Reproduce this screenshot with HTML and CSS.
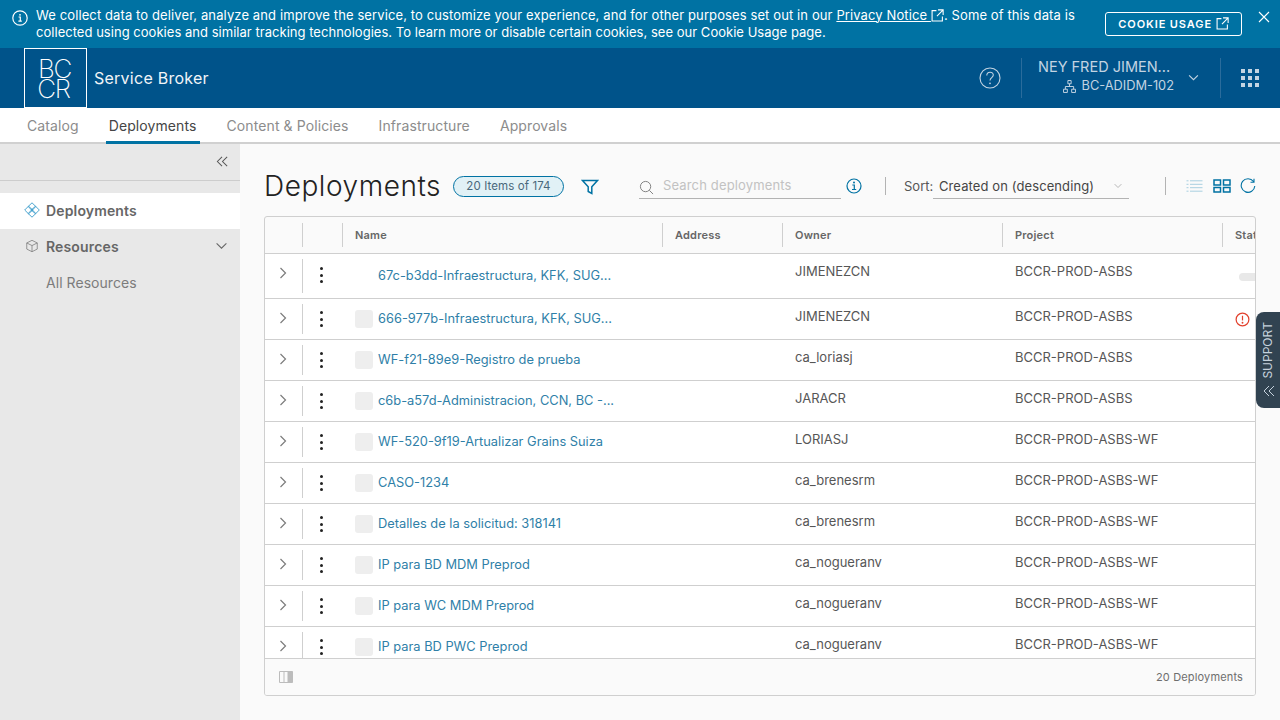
FILE: index.html
```html
<!DOCTYPE html>
<html lang="en">
<head>
<meta charset="utf-8">
<title>Deployments - Service Broker</title>
<link rel="stylesheet" href="styles.css">
</head>
<body>
<section class="banner">
  <svg class="banner-info" viewBox="0 0 16 16"><circle cx="8" cy="8" r="7.200"/><path d="M6.600 7h1.700v4M6.400 11.200h3.400"/><circle class="dot" cx="8" cy="4.800" r=".9"/></svg>
  <p class="banner-text">We collect data to deliver, analyze and improve the service, to customize your experience, and for other purposes set out in our <a class="banner-link">Privacy Notice </a><svg class="ext" viewBox="0 0 12 12"><path d="M5 1.500H1v9.500h9.500V7M6.500 .8h4.700v4.700M11 1 5.500 6.500"/></svg>. Some of this data is <span class="banner-line2">collected using cookies and similar tracking technologies. To learn more or disable certain cookies, see our Cookie Usage page.</span></p>
  <button class="cookie-btn">COOKIE USAGE <svg class="ext" viewBox="0 0 12 12"><path d="M5 1.500H1v9.500h9.500V7M6.500 .8h4.700v4.700M11 1 5.500 6.500"/></svg></button>
  <svg class="banner-close" viewBox="0 0 12 12"><path d="M1 1l10 10M11 1 1 11"/></svg>
</section>
<header class="topbar">
  <div class="logo"><span class="logo-bc">BC</span><span class="logo-cr">CR</span></div>
  <div class="app-name">Service Broker</div>
  <div class="top-right">
    <svg class="help" viewBox="0 0 22 22"><circle cx="11" cy="11" r="10"/><path d="M7.800 8.500c0-4.300 6.500-4.300 6.500-.4 0 2.600-3.300 2.500-3.300 5.400"/><circle class="dot" cx="11" cy="16.300" r=".9"/></svg>
    <div class="user">
      <div class="user-name">NEY FRED JIMEN...</div>
      <div class="user-org"><svg viewBox="0 0 12 12"><path d="M4.500.5h3v3h-3zM.5 8.500h3.500v3H.5zM8 8.500h3.500v3H8zM6 3.500V6M2.200 8.500V6h7.600v2.500"/></svg>BC-ADIDM-102</div>
      <svg class="user-chev" viewBox="0 0 12 8"><path d="M1 1.500l5 5 5-5"/></svg>
    </div>
    <div class="apps"><i></i><i></i><i></i><i></i><i></i><i></i><i></i><i></i><i></i></div>
  </div>
</header>
<nav class="tabs">
  <a class="tab">Catalog</a>
  <a class="tab active">Deployments</a>
  <a class="tab">Content &amp; Policies</a>
  <a class="tab">Infrastructure</a>
  <a class="tab">Approvals</a>
</nav>
<div class="body">
  <aside class="side">
    <div class="side-top"><svg viewBox="0 0 14 12"><path d="M6.500 1 1.500 6l5 5M12 1 7 6l5 5"/></svg></div>
    <a class="side-item current"><svg class="side-ico blue" viewBox="0 0 16 16"><path d="M4.500 4.200 8.800 8 4.500 11.800.7 8zM11.500 4.200 15.300 8l-3.800 3.800L7.200 8zM8 .8 11.800 4.500 8 8.500 4.200 4.500zM8 7.500l3.800 4L8 15.200 4.200 11.500z"/></svg>Deployments</a>
    <a class="side-item"><svg class="side-ico" viewBox="0 0 16 16"><path d="M8 1.500 14 4.500v7L8 14.500 2 11.500v-7zM2 4.500l6 3 6-3M8 7.500v7"/></svg>Resources<svg class="side-chev" viewBox="0 0 14 9"><path d="M1.500 1.500 7 7l5.500-5.500"/></svg></a>
    <a class="side-sub">All Resources</a>
  </aside>
  <main class="main">
    <div class="toolbar">
      <h1>Deployments</h1>
      <span class="count">20 Items of 174</span>
      <svg class="filter" viewBox="0 0 18 16"><path d="M1.500 1.500h15l-5.700 6.300v6.700l-3.600-2V7.800z"/></svg>
      <div class="search">
        <svg viewBox="0 0 16 16"><circle cx="7" cy="7" r="5.500"/><path d="M11 11l4 4"/></svg>
        <span>Search deployments</span>
      </div>
      <svg class="s-info" viewBox="0 0 16 16"><circle cx="8" cy="8" r="7"/><path d="M6.300 7h2v4.300M6 11.500h4.200"/><circle class="dot" cx="8" cy="4.600" r="1"/></svg>
      <div class="divider"></div>
      <span class="sort-label">Sort:</span>
      <div class="sort-select"><span>Created on (descending)</span><svg viewBox="0 0 12 8"><path d="M1.500 1.500 6 6l4.500-4.500"/></svg></div>
      <div class="divider second"></div>
      <svg class="view light" viewBox="0 0 16 12"><path d="M0 .8h2M3.500 .8H16M0 4.300h2M3.500 4.300H16M0 7.700h2M3.500 7.700H16M0 11.200h2M3.500 11.200H16"/></svg>
      <svg class="view grid" viewBox="0 0 18 14"><path d="M1 1h6.500v5H1zM10.500 1H17v5h-6.500zM1 8.500h6.500V13H1zM10.500 8.500H17V13h-6.500z"/></svg>
      <svg class="view refresh" viewBox="0 0 16 16"><path d="M13.500 3.500A6.800 6.800 0 1 0 14.800 8M14 .7v3.500h-3.500"/></svg>
    </div>
    <div class="table">
      <div class="thead">
        <div class="th c-exp"></div><div class="th c-act"></div>
        <div class="th c-name">Name</div><div class="th c-addr">Address</div>
        <div class="th c-owner">Owner</div><div class="th c-proj">Project</div><div class="th c-stat">Status</div>
      </div>
      <div class="tbody">
        <div class="row first">
          <div class="c-exp td"><svg class="chev" viewBox="0 0 8 12"><path d="M1.500 1 6.500 6l-5 5"/></svg></div>
          <div class="c-act td"><span class="kebab"><i></i><i></i><i></i></span></div>
          <div class="c-name td"><span class="thumb none"></span><a>67c-b3dd-Infraestructura, KFK, SUG...</a></div>
          <div class="c-addr td"></div><div class="c-owner td">JIMENEZCN</div><div class="c-proj td">BCCR-PROD-ASBS</div>
          <div class="c-stat td"><span class="progress"></span></div>
        </div>
        <div class="row">
          <div class="c-exp td"><svg class="chev" viewBox="0 0 8 12"><path d="M1.500 1 6.500 6l-5 5"/></svg></div>
          <div class="c-act td"><span class="kebab"><i></i><i></i><i></i></span></div>
          <div class="c-name td"><span class="thumb"></span><a>666-977b-Infraestructura, KFK, SUG...</a></div>
          <div class="c-addr td"></div><div class="c-owner td">JIMENEZCN</div><div class="c-proj td">BCCR-PROD-ASBS</div>
          <div class="c-stat td"><svg class="err" viewBox="0 0 16 16"><circle cx="8" cy="8" r="6.800"/><path d="M8 4v5"/><circle class="dot" cx="8" cy="11.500" r="1"/></svg></div>
        </div>
        <div class="row">
          <div class="c-exp td"><svg class="chev" viewBox="0 0 8 12"><path d="M1.500 1 6.500 6l-5 5"/></svg></div>
          <div class="c-act td"><span class="kebab"><i></i><i></i><i></i></span></div>
          <div class="c-name td"><span class="thumb"></span><a>WF-f21-89e9-Registro de prueba</a></div>
          <div class="c-addr td"></div><div class="c-owner td">ca_loriasj</div><div class="c-proj td">BCCR-PROD-ASBS</div><div class="c-stat td"></div>
        </div>
        <div class="row">
          <div class="c-exp td"><svg class="chev" viewBox="0 0 8 12"><path d="M1.500 1 6.500 6l-5 5"/></svg></div>
          <div class="c-act td"><span class="kebab"><i></i><i></i><i></i></span></div>
          <div class="c-name td"><span class="thumb"></span><a>c6b-a57d-Administracion, CCN, BC -...</a></div>
          <div class="c-addr td"></div><div class="c-owner td">JARACR</div><div class="c-proj td">BCCR-PROD-ASBS</div><div class="c-stat td"></div>
        </div>
        <div class="row">
          <div class="c-exp td"><svg class="chev" viewBox="0 0 8 12"><path d="M1.500 1 6.500 6l-5 5"/></svg></div>
          <div class="c-act td"><span class="kebab"><i></i><i></i><i></i></span></div>
          <div class="c-name td"><span class="thumb"></span><a>WF-520-9f19-Artualizar Grains Suiza</a></div>
          <div class="c-addr td"></div><div class="c-owner td">LORIASJ</div><div class="c-proj td">BCCR-PROD-ASBS-WF</div><div class="c-stat td"></div>
        </div>
        <div class="row">
          <div class="c-exp td"><svg class="chev" viewBox="0 0 8 12"><path d="M1.500 1 6.500 6l-5 5"/></svg></div>
          <div class="c-act td"><span class="kebab"><i></i><i></i><i></i></span></div>
          <div class="c-name td"><span class="thumb"></span><a>CASO-1234</a></div>
          <div class="c-addr td"></div><div class="c-owner td">ca_brenesrm</div><div class="c-proj td">BCCR-PROD-ASBS-WF</div><div class="c-stat td"></div>
        </div>
        <div class="row">
          <div class="c-exp td"><svg class="chev" viewBox="0 0 8 12"><path d="M1.500 1 6.500 6l-5 5"/></svg></div>
          <div class="c-act td"><span class="kebab"><i></i><i></i><i></i></span></div>
          <div class="c-name td"><span class="thumb"></span><a>Detalles de la solicitud: 318141</a></div>
          <div class="c-addr td"></div><div class="c-owner td">ca_brenesrm</div><div class="c-proj td">BCCR-PROD-ASBS-WF</div><div class="c-stat td"></div>
        </div>
        <div class="row">
          <div class="c-exp td"><svg class="chev" viewBox="0 0 8 12"><path d="M1.500 1 6.500 6l-5 5"/></svg></div>
          <div class="c-act td"><span class="kebab"><i></i><i></i><i></i></span></div>
          <div class="c-name td"><span class="thumb"></span><a>IP para BD MDM Preprod</a></div>
          <div class="c-addr td"></div><div class="c-owner td">ca_nogueranv</div><div class="c-proj td">BCCR-PROD-ASBS-WF</div><div class="c-stat td"></div>
        </div>
        <div class="row">
          <div class="c-exp td"><svg class="chev" viewBox="0 0 8 12"><path d="M1.500 1 6.500 6l-5 5"/></svg></div>
          <div class="c-act td"><span class="kebab"><i></i><i></i><i></i></span></div>
          <div class="c-name td"><span class="thumb"></span><a>IP para WC MDM Preprod</a></div>
          <div class="c-addr td"></div><div class="c-owner td">ca_nogueranv</div><div class="c-proj td">BCCR-PROD-ASBS-WF</div><div class="c-stat td"></div>
        </div>
        <div class="row">
          <div class="c-exp td"><svg class="chev" viewBox="0 0 8 12"><path d="M1.500 1 6.500 6l-5 5"/></svg></div>
          <div class="c-act td"><span class="kebab"><i></i><i></i><i></i></span></div>
          <div class="c-name td"><span class="thumb"></span><a>IP para BD PWC Preprod</a></div>
          <div class="c-addr td"></div><div class="c-owner td">ca_nogueranv</div><div class="c-proj td">BCCR-PROD-ASBS-WF</div><div class="c-stat td"></div>
        </div>
      </div>
      <div class="tfoot">
        <svg class="cols" viewBox="0 0 14 12"><path class="fill" d="M9 .5h4.500v11H9z"/><path d="M.5.500h13v11H.5zM5 .5v11M9 .5v11"/></svg>
        <span>20 Deployments</span>
      </div>
    </div>
  </main>
</div>
<aside class="support"><span>SUPPORT</span><svg viewBox="0 0 12 12"><path d="M6 1 1 6l5 5M11 1 6 6l5 5"/></svg></aside>
</body>
</html>
```
FILE: styles.css
```css
* { box-sizing: border-box; }
html, body { margin: 0; height: 720px; overflow: hidden; }
body {
  display: flex; flex-direction: column; position: relative;
  font-family: Inter, "Liberation Sans", sans-serif; color: #565656; background: #fafafa;
}
svg { fill: none; stroke: currentColor; flex: none; display: block; }
svg .dot { fill: currentColor; stroke: none; }
p, h1 { margin: 0; }

.banner { height: 48px; flex: none; background: #0072a3; color: #fff; display: flex; align-items: center; padding-left: 12px; }
.banner-info { width: 16px; height: 16px; stroke-width: 1.200; margin-right: 8px; align-self: flex-start; margin-top: 10px; }
.banner-text { width: 1065px; font-size: 13px; line-height: 17px; letter-spacing: .11px; margin-top: -1px; }
.banner-line2 { letter-spacing: .03px; }
.banner-link { text-decoration: underline; }
.ext { display: inline-block; width: 13px; height: 13px; stroke-width: 1; vertical-align: -2px; margin-left: 0; }
.cookie-btn { width: 137px; height: 24px; margin-left: 4px; background: transparent; border: 1px solid #fff; border-radius: 3px; color: #fff; font: 600 11px Inter, sans-serif; letter-spacing: .9px; padding: 0; }
.banner-close { width: 12px; height: 12px; stroke-width: 1.100; margin-left: 16px; margin-top: -14px; }

.topbar { height: 60px; flex: none; background: #00538a; color: #fff; display: flex; align-items: center; padding-left: 24px; }
.logo { width: 63px; height: 60px; border: 1px solid #fff; display: flex; flex-direction: column; align-items: center; justify-content: center; font-size: 26px; font-weight: 200; line-height: 20px; letter-spacing: -1.400px; padding-top: 1px; }
.logo-bc { margin-left: -2px; }
.logo-cr { margin-left: -4px; }
.app-name { margin-left: 7px; padding-bottom: 1px; font-size: 16px; letter-spacing: .25px; color: #f2f5f8; }
.top-right { margin-left: auto; display: flex; align-items: center; height: 40px; color: #c3d4e2; }
.help { width: 22px; height: 22px; stroke-width: 1.100; margin-right: 20px; }
.user { position: relative; width: 200px; height: 40px; border-left: 1px solid #2a6c9c; border-right: 1px solid #2a6c9c; padding: 0 0 0 16px; }
.user-name { font-size: 14.500px; line-height: 18px; }
.user-org { width: 136px; display: flex; justify-content: flex-end; align-items: center; gap: 6px; font-size: 12.800px; line-height: 18px; margin-top: 1px; }
.user-org svg { width: 13px; height: 13px; stroke-width: .9; }
.user-chev { position: absolute; left: 166px; top: 16px; width: 11px; height: 7px; stroke-width: 1.300; }
.apps { width: 18px; height: 18px; margin: 0 21px 0 20px; display: grid; grid-template-columns: repeat(3, 4px); gap: 3px; }
.apps i { background: #c3d4e2; width: 4px; height: 4px; }

.tabs { height: 36px; flex: none; background: #fff; border-bottom: 2px solid #d0d0d0; display: flex; padding-left: 24px; font-size: 14px; letter-spacing: .1px; }
.tab { height: 36px; padding: 0 3px; margin-right: 24px; color: #8c8c8c; line-height: 36px; }
.tab.active { color: #454545; border-bottom: 3px solid #0072a3; }

.body { flex: 1; display: flex; min-height: 0; }
.side { width: 240px; flex: none; background: #e8e8e8; }
.side-top { height: 37px; border-bottom: 1px solid #cdcdcd; display: flex; justify-content: flex-end; align-items: center; padding: 0 11px 2px 0; margin-bottom: 12px; }
.side-top svg { width: 13px; height: 13px; color: #565656; stroke-width: 1.100; }
.side-item { height: 36px; display: flex; align-items: center; padding: 0 0 2px 25px; font-size: 14px; font-weight: 600; color: #666; letter-spacing: .15px; }
.side-item.current { background: #fff; }
.side-ico { width: 14px; height: 14px; margin-right: 7px; stroke-width: .9; color: #7c7c7c; }
.side-ico.blue { width: 16px; height: 16px; color: #3a9ccb; margin-left: -1px; margin-right: 6px; }
.side-chev { width: 13px; height: 8px; margin-left: auto; margin-right: 12px; stroke-width: 1.200; color: #666; }
.side-sub { display: block; height: 36px; line-height: 36px; padding-left: 46px; font-size: 14px; color: #7c7c7c; letter-spacing: .05px; }

.main { flex: 1; min-width: 0; padding: 0 24px; display: flex; flex-direction: column; }
.toolbar { height: 72px; flex: none; display: flex; align-items: center; padding-top: 12px; }
h1 { font-size: 28px; font-weight: 300; color: #222; letter-spacing: .55px; width: 189px; }
.count { width: 111px; height: 21px; border: 1px solid #0072a3; border-radius: 11px; background: #e1f1f6; color: #49687c; font-size: 11.500px; line-height: 19px; text-align: center; letter-spacing: .1px; }
.filter { width: 18px; height: 16px; color: #0072a3; stroke-width: 1.500; margin: 2px 0 0 17px; }
.search { width: 202px; height: 24px; margin-left: 40px; border-bottom: 1px solid #b3b3b3; display: flex; align-items: center; gap: 9px; font-size: 13px; letter-spacing: .15px; color: #c2c2c2; margin-top: 2px; }
.search svg { width: 15px; height: 15px; color: #7c7c7c; stroke-width: 1; margin-top: 2px; }
.search span { margin-top: -3px; }
.s-info { width: 16px; height: 16px; color: #0072a3; stroke-width: 1.200; margin-left: 5px; }
.divider { width: 1px; height: 18px; background: #b3b3b3; margin-left: 23px; }
.divider.second { margin-left: 36px; }
.sort-label { width: 29px; font-size: 13px; margin-left: 18px; color: #565656; }
.sort-select { width: 196px; height: 24px; border-bottom: 1px solid #b3b3b3; display: flex; align-items: center; justify-content: space-between; padding: 0 6px 0 6px; font-size: 13px; letter-spacing: .1px; color: #454545; margin-top: 2px; }
.sort-select span { margin-top: -2px; }
.sort-select svg { width: 10px; height: 6px; color: #a0a0a0; stroke-width: 1; margin-top: -2px; }
.view { color: #0072a3; }
.view.light { width: 17px; height: 12px; margin-left: 20px; color: #a8cfe0; stroke-width: 1; }
.view.grid { width: 18px; height: 14px; margin-left: 10px; stroke-width: 1.500; }
.view.refresh { width: 16px; height: 16px; margin-left: 9px; stroke-width: 1.100; }

.table { width: 992px; height: 480px; background: #fafafa; border: 1px solid #cfcfcf; border-radius: 3px; display: flex; flex-direction: column; overflow: hidden; }
.thead { height: 37px; flex: none; display: flex; align-items: center; border-bottom: 1px solid #cfcfcf; }
.th { height: 24px; border-right: 1px solid #cfcfcf; font-size: 11px; font-weight: 600; line-height: 24px; color: #666; padding-left: 12px; white-space: nowrap; letter-spacing: .2px; }
.th.c-stat { border-right: 0; overflow: hidden; }
.c-exp { width: 38px; flex: none; }
.c-act { width: 40px; flex: none; }
.c-name { width: 320px; flex: none; }
.c-addr { width: 120px; flex: none; }
.c-owner { width: 220px; flex: none; }
.c-proj { width: 220px; flex: none; }
.c-stat { width: 34px; flex: none; }

.tbody { flex: 1; min-height: 0; overflow: hidden; background: #fff; }
.row { height: 41px; display: flex; border-bottom: 1px solid #cfcfcf; font-size: 13px; line-height: 18px; color: #565656; }
.row.first { height: 45px; }
.td { padding: 8px 0 0 12px; white-space: nowrap; }
.c-act.td { padding: 3px 0 0 0; }
.row .c-exp.td { border-right: 1px solid #cfcfcf; margin: 5px 0; padding: 8px 0 0 14px; }
.chev { width: 8px; height: 12px; color: #7c7c7c; stroke-width: 1.200; }
.kebab { display: flex; flex-direction: column; gap: 3.500px; width: 3px; margin: 9px 0 0 17px; }
.first .c-act.td { padding-top: 4px; }
.kebab i { width: 3px; height: 3px; background: #222; border-radius: 50%; }
.c-name.td { display: flex; align-items: flex-start; padding-top: 11px; }
.c-name a { color: #2f7fa8; font-size: 12.850px; }
.thumb { width: 18px; height: 18px; background: #eee; border-radius: 3px; margin-right: 5px; flex: none; }
.thumb.none { background: transparent; }
.first .c-name.td { padding-top: 13px; }
.progress { display: block; width: 16px; height: 8px; border-radius: 4px 0 0 4px; background: #e8e8e8; margin: 11px 0 0 4px; }
.err { width: 15px; height: 15px; color: #e2402c; stroke-width: 1.300; margin: 5px 0 0 0; }

.tfoot { height: 37px; flex: none; border-top: 1px solid #cfcfcf; margin-top: -1px; background: #fafafa; display: flex; align-items: center; justify-content: space-between; padding: 0 12px 0 14px; font-size: 11px; letter-spacing: .15px; color: #6e6e6e; position: relative; }
.cols { width: 14px; height: 12px; color: #bcbcbc; stroke-width: 1; }
.cols .fill { fill: #bcbcbc; stroke: none; }

.support { position: absolute; right: 0; top: 312px; width: 24px; height: 96px; background: #314351; border-radius: 8px 0 0 8px; color: #c5d1dc; display: flex; flex-direction: column; align-items: center; padding-top: 10px; font-size: 12px; }
.support span { writing-mode: vertical-rl; transform: rotate(180deg); line-height: 18px; }
.support svg { width: 12px; height: 12px; stroke-width: 1; margin-top: 6px; margin-left: 1px; }
```
